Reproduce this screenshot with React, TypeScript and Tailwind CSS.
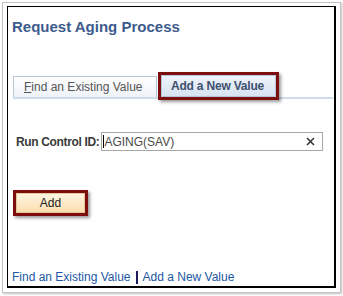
export default function App() {
  return (
    <div className="h-[296px] w-[343px] bg-white font-['Liberation_Sans',Arial,sans-serif] pl-[2px] pt-[2px]">
      <div className="h-[291px] w-[339px] border border-[#c4c4c4] bg-white pl-[4px] pt-[3px] shadow-[1px_1px_2px_rgba(0,0,0,0.25)]">
        <div className="flex h-[282px] w-[329px] flex-col border-l border-t border-r-2 border-b-2 border-black">
          <h1 className="ml-[4px] mt-[11px] text-[15px] font-bold leading-[17px] text-[#3d5b8c]">
            Request Aging Process
          </h1>

          <div className="ml-[5px] mr-px mt-[37px] flex h-[27px] items-end border-b-2 border-[#cfdcec]">
            <div className="flex h-[21px] w-[144px] items-center border border-b-0 border-[#b9c6d6] bg-gradient-to-b from-white to-[#eef2f7] pl-[10px] text-[12px] leading-[14px] text-[#555]">
              <span>
                <span className="underline">F</span>ind an Existing Value
              </span>
            </div>
            <div className="relative z-10 -mb-[3px] ml-px h-[28px] w-[121px] border-[3px] border-[#7c0e0e] shadow-[2px_2px_3px_rgba(0,0,0,0.4)]">
              <div className="flex h-full items-center justify-center border border-[#b4c6de] bg-gradient-to-b from-[#eef3fa] to-[#d7e3f2] pr-[2px] text-[12px] font-bold leading-[14px] tracking-[-0.2px] text-[#3f506f]">
                Add a New Value
              </div>
            </div>
          </div>

          <div className="ml-[8px] mt-[33px] flex items-center">
            <label className="text-[12px] font-bold leading-[14px] tracking-[-0.35px] text-[#3a3a3a]">
              Run Control ID:
            </label>
            <div className="ml-[2px] flex h-[19px] w-[222px] items-center border border-[#a8a8a8] bg-white pl-[1px] pr-[7px]">
              <span className="h-[13px] w-px bg-black" />
              <span className="flex-1 text-[12px] leading-[14px] text-[#4a4a4a]">AGING(SAV)</span>
              <svg width="9" height="9" viewBox="0 0 9 9" className="text-[#333]">
                <path d="M1 1L8 8M8 1L1 8" stroke="currentColor" strokeWidth="1.5" />
              </svg>
            </div>
          </div>

          <div className="ml-[5px] mt-[39px] h-[26px] w-[75px] border-[3px] border-[#7c0e0e] shadow-[2px_2px_3px_rgba(0,0,0,0.4)]">
            <div className="flex h-full items-center justify-center border border-[#e3c79a] bg-gradient-to-b from-[#fff3e0] to-[#fbdfb0] text-[12px] leading-[14px] text-[#222]">
              Add
            </div>
          </div>

          <div className="ml-[4px] mt-[54px] flex items-center text-[12px] leading-[14px] text-[#2257a5]">
            <span>Find an Existing Value</span>
            <span className="mx-[5px] h-[13px] w-[2px] bg-[#1c1c5c]" />
            <span>Add a New Value</span>
          </div>
        </div>
      </div>
    </div>
  );
}
